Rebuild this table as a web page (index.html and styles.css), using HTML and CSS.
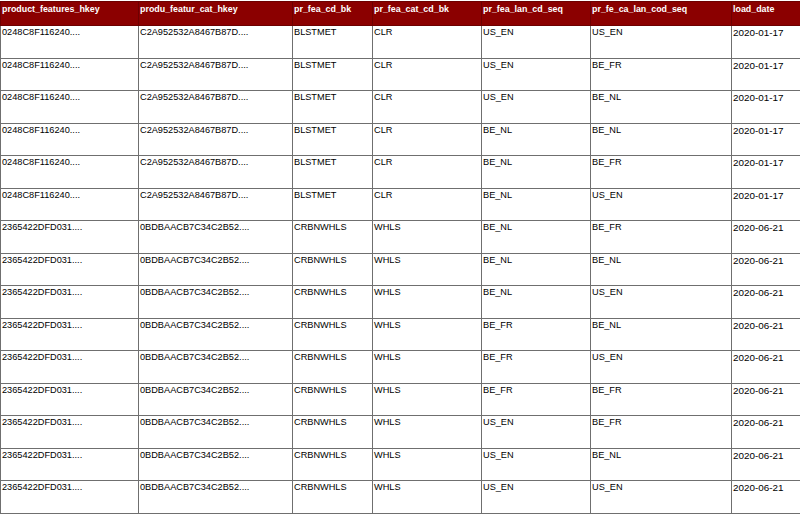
FILE: index.html
```html
<!DOCTYPE html>
<html>
<head>
<meta charset="utf-8">
<link rel="stylesheet" href="styles.css">
</head>
<body>
<div class="wrap">
<table class="grid">
<colgroup>
<col class="c1"><col class="c2"><col class="c3"><col class="c4"><col class="c5"><col class="c6"><col class="c7">
</colgroup>
<thead>
<tr><th>product_features_hkey</th><th>produ_featur_cat_hkey</th><th>pr_fea_cd_bk</th><th>pr_fea_cat_cd_bk</th><th>pr_fea_lan_cd_seq</th><th>pr_fe_ca_lan_cod_seq</th><th>load_date</th></tr>
</thead>
<tbody>
<tr><td>0248C8F116240....</td><td>C2A952532A8467B87D....</td><td>BLSTMET</td><td>CLR</td><td>US_EN</td><td>US_EN</td><td class="date">2020-01-17</td></tr>
<tr><td>0248C8F116240....</td><td>C2A952532A8467B87D....</td><td>BLSTMET</td><td>CLR</td><td>US_EN</td><td>BE_FR</td><td class="date">2020-01-17</td></tr>
<tr><td>0248C8F116240....</td><td>C2A952532A8467B87D....</td><td>BLSTMET</td><td>CLR</td><td>US_EN</td><td>BE_NL</td><td class="date">2020-01-17</td></tr>
<tr><td>0248C8F116240....</td><td>C2A952532A8467B87D....</td><td>BLSTMET</td><td>CLR</td><td>BE_NL</td><td>BE_NL</td><td class="date">2020-01-17</td></tr>
<tr><td>0248C8F116240....</td><td>C2A952532A8467B87D....</td><td>BLSTMET</td><td>CLR</td><td>BE_NL</td><td>BE_FR</td><td class="date">2020-01-17</td></tr>
<tr><td>0248C8F116240....</td><td>C2A952532A8467B87D....</td><td>BLSTMET</td><td>CLR</td><td>BE_NL</td><td>US_EN</td><td class="date">2020-01-17</td></tr>
<tr><td>2365422DFD031....</td><td>0BDBAACB7C34C2B52....</td><td>CRBNWHLS</td><td>WHLS</td><td>BE_NL</td><td>BE_FR</td><td class="date">2020-06-21</td></tr>
<tr><td>2365422DFD031....</td><td>0BDBAACB7C34C2B52....</td><td>CRBNWHLS</td><td>WHLS</td><td>BE_NL</td><td>BE_NL</td><td class="date">2020-06-21</td></tr>
<tr><td>2365422DFD031....</td><td>0BDBAACB7C34C2B52....</td><td>CRBNWHLS</td><td>WHLS</td><td>BE_NL</td><td>US_EN</td><td class="date">2020-06-21</td></tr>
<tr><td>2365422DFD031....</td><td>0BDBAACB7C34C2B52....</td><td>CRBNWHLS</td><td>WHLS</td><td>BE_FR</td><td>BE_NL</td><td class="date">2020-06-21</td></tr>
<tr><td>2365422DFD031....</td><td>0BDBAACB7C34C2B52....</td><td>CRBNWHLS</td><td>WHLS</td><td>BE_FR</td><td>US_EN</td><td class="date">2020-06-21</td></tr>
<tr><td>2365422DFD031....</td><td>0BDBAACB7C34C2B52....</td><td>CRBNWHLS</td><td>WHLS</td><td>BE_FR</td><td>BE_FR</td><td class="date">2020-06-21</td></tr>
<tr><td>2365422DFD031....</td><td>0BDBAACB7C34C2B52....</td><td>CRBNWHLS</td><td>WHLS</td><td>US_EN</td><td>BE_FR</td><td class="date">2020-06-21</td></tr>
<tr><td>2365422DFD031....</td><td>0BDBAACB7C34C2B52....</td><td>CRBNWHLS</td><td>WHLS</td><td>US_EN</td><td>BE_NL</td><td class="date">2020-06-21</td></tr>
<tr><td>2365422DFD031....</td><td>0BDBAACB7C34C2B52....</td><td>CRBNWHLS</td><td>WHLS</td><td>US_EN</td><td>US_EN</td><td class="date">2020-06-21</td></tr>
</tbody>
</table>
</div>
</body>
</html>
```

FILE: styles.css
```css
html, body {
  margin: 0;
  padding: 0;
  background: #ffffff;
  overflow: hidden;
}
.wrap {
  width: 800px;
  height: 514px;
  overflow: hidden;
  padding-top: 1px;
  box-sizing: border-box;
}
.grid {
  border-collapse: collapse;
  table-layout: fixed;
  width: 830px;
  font-family: "Liberation Sans", Arial, Helvetica, sans-serif;
  font-size: 9.2px;
  color: #000;
}
.c1 { width: 138px; }
.c2 { width: 154px; }
.c3 { width: 80px; }
.c4 { width: 109px; }
.c5 { width: 109px; }
.c6 { width: 141px; }
.c7 { width: 99px; }
.grid th, .grid td {
  border: 1px solid #6f6f6f;
  padding: 1px 1px 0 1px;
  text-align: left;
  vertical-align: top;
  white-space: nowrap;
  overflow: hidden;
  line-height: 11px;
}
.grid thead tr {
  height: 24px;
}
.grid tbody tr {
  height: 32.5px;
}
.grid th {
  background: #8b0000;
  color: #ffffff;
  font-weight: bold;
  font-size: 8.9px;
  padding-top: 2px;
  border-color: #6e0000;
}
.grid td.date {
  font-size: 9.9px;
}
```
